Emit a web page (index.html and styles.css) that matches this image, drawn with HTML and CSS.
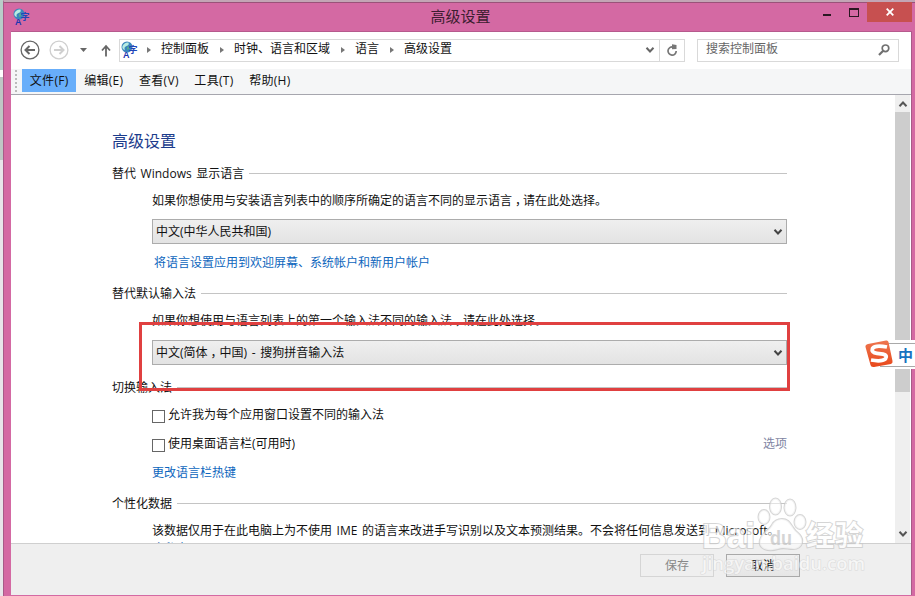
FILE: index.html
```html
<!DOCTYPE html>
<html lang="zh-CN">
<head>
<meta charset="utf-8">
<title>高级设置</title>
<link rel="stylesheet" href="styles.css">
</head>
<body>
<svg class="defs" width="0" height="0">
  <symbol id="lang" viewBox="0 0 18 18" overflow="visible">
    <circle cx="6" cy="6" r="5.500" fill="#3a86bd"/>
    <path d="M1.500 5Q3.500 1 7.500 1.500Q8.500 4 5.500 5T4 9Q.5 8 1.500 5Z" fill="#b8ece2"/>
    <path d="M6 6L9 4.500L8 8L6 9Z" fill="#52aa91"/>
    <text x="7.500" y="12" class="g-zi">字</text>
    <text x="2" y="17" class="g-a">A</text>
  </symbol>
  <symbol id="chev" viewBox="0 0 10 8"><path d="M1.500 1.800L5 5.500L8.500 1.800" fill="none" stroke="currentColor" stroke-width="2"/></symbol>
</svg>
<div class="window">
  <header class="title">
    <svg class="t-icon"><use href="#lang"/></svg>
    <span class="t-text">高级设置</span>
    <div class="controls">
      <svg class="c-min" viewBox="0 0 8 2"><path d="M0 0H8V2H0Z" fill="#2b1722"/></svg>
      <svg class="c-max" viewBox="0 0 10 9"><path d="M0 0H10V9H0ZM1 2V8H9V2Z" fill="#2b1722" fill-rule="evenodd"/></svg>
      <div class="c-close"><svg width="8" height="8" viewBox="0 0 8 8"><path d="M.7.7L7.300 7.300M7.300.7L.7 7.300" stroke="#fff" stroke-width="1.800"/></svg></div>
    </div>
  </header>
  <div class="client">
    <nav class="nav">
      <svg class="arrow" viewBox="0 0 20 20"><g fill="none" stroke="#666"><circle cx="10" cy="10" r="8.900" stroke-width="1.300"/><path d="M15 10H6M9.500 6L5.500 10L9.500 14" stroke-width="2"/></g></svg>
      <svg class="arrow fwd" viewBox="0 0 20 20"><g fill="none" stroke="#cfcfcf"><circle cx="10" cy="10" r="8.900" stroke-width="1.300"/><path d="M5 10H14M10.500 6L14.500 10L10.500 14" stroke-width="2"/></g></svg>
      <svg class="hist" viewBox="0 0 7 4"><path d="M0 0H7L3.500 4Z" fill="#666"/></svg>
      <svg class="up" viewBox="0 0 10 12"><path d="M5 12V2M1 6L5 1.500L9 6" fill="none" stroke="#666" stroke-width="1.800"/></svg>
      <div class="address">
        <svg class="a-icon"><use href="#lang"/></svg>
        <i class="tri"></i><span>控制面板</span>
        <i class="tri"></i><span>时钟、语言和区域</span>
        <i class="tri"></i><span>语言</span>
        <i class="tri"></i><span>高级设置</span>
        <svg class="a-chev"><use href="#chev"/></svg>
        <div class="refresh"><svg width="12" height="13" viewBox="0 0 12 13"><path d="M7 3A4.100 4.100 0 1 0 10.200 7" fill="none" stroke="#777" stroke-width="1.700"/><path d="M6 .3L10.500 1V5L6 5.200Z" fill="#777"/></svg></div>
      </div>
      <div class="search"><span>搜索控制面板</span><svg width="12" height="12" viewBox="0 0 12 12"><circle cx="7.500" cy="4.300" r="3.300" fill="none" stroke="#707070" stroke-width="1.700"/><path d="M5.200 6.800L1 11" stroke="#707070" stroke-width="2.200"/></svg></div>
    </nav>
    <div class="menu">
      <i class="grip"></i>
      <span class="on">文件(F)</span><span>编辑(E)</span><span>查看(V)</span><span>工具(T)</span><span>帮助(H)</span>
    </div>
    <div class="main">
      <div class="page">
        <h1>高级设置</h1>
        <h2>替代 Windows 显示语言</h2>
        <p class="desc">如果你想使用与安装语言列表中的顺序所确定的语言不同的显示语言<span class="comma">，</span>请在此处选择。</p>
        <div class="select">中文(中华人民共和国)<svg><use href="#chev"/></svg></div>
        <a class="apply">将语言设置应用到欢迎屏幕、系统帐户和新用户帐户</a>
        <h2>替代默认输入法</h2>
        <p class="desc">如果你想使用与语言列表上的第一个输入法不同的输入法<span class="comma">，</span>请在此处选择。</p>
        <div class="select second">中文(简体<span class="comma">，</span>中国) - 搜狗拼音输入法<svg><use href="#chev"/></svg></div>
        <h2 class="switch">切换输入法</h2>
        <div class="check first"><i></i>允许我为每个应用窗口设置不同的输入法</div>
        <div class="check"><i></i>使用桌面语言栏(可用时)<span class="option">选项</span></div>
        <a class="hotkey">更改语言栏热键</a>
        <h2 class="personal">个性化数据</h2>
        <p class="desc data">该数据仅用于在此电脑上为不使用 IME 的语言来改进手写识别以及文本预测结果。不会将任何信息发送到 Microsoft。</p>
        <a class="privacy">隐私声明</a>
      </div>
      <div class="scroll">
        <svg class="s-up"><use href="#chev"/></svg>
        <div class="thumb"></div>
        <svg class="s-down"><use href="#chev"/></svg>
      </div>
    </div>
    <footer><div class="btn off">保存</div><div class="btn">取消</div></footer>
  </div>
</div>
<div class="marker"></div>
<div class="ime"><span>中</span></div>
<svg class="sogou" viewBox="0 0 28 28">
  <defs><linearGradient id="og" x1="0" y1="0" x2="0" y2="1"><stop offset="0" stop-color="#ee7650"/><stop offset="1" stop-color="#e8481a"/></linearGradient></defs>
  <path d="M3 4L21 .5Q23 0 23.500 2L27.500 21Q28 23 26 24L9 27Q6 27.500 5.500 25L.5 7Q0 5 3 4Z" fill="url(#og)"/>
  <path d="M22 7Q10 4.500 7.500 8.500Q6 12.500 12 13.300L18 14.200Q23 15.500 20.500 18.800Q17 22 6 20" fill="none" stroke="#fff" stroke-width="3.800"/>
</svg>
<svg class="wm" viewBox="0 0 170 85">
  <g class="wm-big"><text x="0" y="51" textLength="53" lengthAdjust="spacingAndGlyphs">Bai</text><text class="wm-cjk" x="104" y="49" textLength="57">经验</text></g>
  <g class="paw"><ellipse cx="62" cy="20" rx="5.500" ry="7"/><ellipse cx="73.500" cy="9.500" rx="5.500" ry="8"/><ellipse cx="88" cy="10.500" rx="5.500" ry="8"/><ellipse cx="98" cy="25" rx="5.500" ry="7"/><path d="M80 22C89 22 89 31 96 36C103 42 101 52 91 52C85 52 82 50 76 52C66 55 56 52 58 43C60 35 67 34 70 28C72 24 76 22 80 22Z"/></g>
  <text class="wm-du" x="68" y="48" textLength="22" lengthAdjust="spacingAndGlyphs">du</text>
  <text class="wm-url" x="0" y="73" textLength="163" lengthAdjust="spacingAndGlyphs">jingyan.baidu.com</text>
</svg>
</body>
</html>
```
FILE: styles.css
```css
* { box-sizing: border-box; }
body {
  margin: 0; width: 915px; height: 596px; overflow: hidden; position: relative;
  background: linear-gradient(#b9cdc9 0 70px, #fff 70px 77px, #bfc5c5 77px 160px, #e8e6ea 160px);
  font: 12px/16px "Open Sans", "Noto Sans CJK SC", sans-serif; color: #111; word-spacing: 1.5px;
}
.defs { position: absolute; }
svg { flex: none; display: block; overflow: visible; }
.g-zi { font: bold 9px "Noto Sans CJK SC", sans-serif; fill: #2145b8; }
.g-a { font: bold 9px "Liberation Sans", sans-serif; fill: #1b35b0; }
.window {
  height: 596px; margin-left: 3px; padding: 0 3px 1px 7px;
  background: #d469a3; border-top: 2px solid #c3a5b5; border-left: 1px solid #a75b87;
  display: flex; flex-direction: column; box-shadow: inset 0 1px #9a5279;
}
.title { height: 30px; display: flex; position: relative; flex: none; border-bottom: 1px solid #b65a8d; }
.t-icon { width: 18px; height: 18px; margin: 6px 0 0 2px; }
.t-text { flex: 1; text-align: center; font-size: 15px; line-height: 29px; color: #3c1d30; padding-left: 67px; }
.controls { display: flex; }
.c-min { width: 8px; height: 2px; margin: 12px 18px 0 0; }
.c-max { width: 10px; height: 9px; margin: 6px 8px 0 0; }
.c-close { width: 45px; height: 20px; background: #c75050; display: flex; align-items: center; justify-content: center; }
.client { flex: 1; min-height: 0; background: #fff; display: flex; flex-direction: column; border-right: 1px solid #a75b87; }
.nav { height: 37px; display: flex; align-items: center; padding: 0 12px 1px 9px; flex: none; }
.nav span { padding-bottom: 2px; }
.arrow { width: 20px; height: 20px; }
.fwd { margin-left: 9px; }
.hist { width: 7px; height: 4px; margin-left: 11px; }
.up { width: 10px; height: 13px; margin: 0 8px 0 14px; }
.address { width: 566px; height: 23px; border: 1px solid #d9d9d9; display: flex; align-items: center; }
.a-icon { width: 18px; height: 18px; margin: 0 8px 0 1px; }
.tri { border-left: 4px solid #777; border-top: 3.5px solid transparent; border-bottom: 3.5px solid transparent; margin: 0 10px 0 11px; }
.a-icon + .tri { margin-left: 0; }
.a-chev { width: 10px; height: 8px; margin: 0 4px 0 auto; color: #666; }
.refresh { width: 25px; height: 21px; border-left: 1px solid #d9d9d9; display: flex; align-items: center; justify-content: center; }
.search { width: 202px; height: 23px; margin-left: 12px; border: 1px solid #d9d9d9; display: flex; align-items: center; justify-content: space-between; padding: 0 8px; color: #666; }
.menu { height: 26px; flex: none; background: #f5f6f7; border-bottom: 1px solid #a6a6ae; display: flex; padding-left: 4px; letter-spacing: .3px; }
.grip { width: 2px; height: 22px; margin: 1px 5px 0 0; background: repeating-linear-gradient(#bbb 0 2px, transparent 2px 4px); }
.menu span { height: 23px; line-height: 23px; padding: 0 7.8px; white-space: nowrap; }
.menu .on { background: #68aefa; }
.main { flex: 1; min-height: 0; display: flex; overflow: hidden; }
.page { width: 884px; padding: 36px 108px 0 101px; overflow: hidden; }
h1 { margin: 0 0 15px; font-size: 16px; line-height: 20px; font-weight: 400; color: #1c3c8c; }
h2 { margin: 0; font-size: 12px; line-height: 16px; font-weight: 400; display: flex; align-items: center; gap: 5px; white-space: nowrap; }
h2::after { content: ""; flex: 1; height: 1px; margin-bottom: 2px; background: #c4c4c4; }
.desc { margin: 11px 0 10px 40px; white-space: nowrap; }
.comma { display: inline-block; width: 12px; padding-left: 3px; margin-right: -1px; }
.select {
  height: 25px; margin-left: 40px; padding: 0 3px; border: 1px solid #acacac;
  background: linear-gradient(#efefef, #e3e3e3); display: flex; align-items: center; white-space: pre;
}
.select .comma { margin-right: 0; }
.select svg { width: 10px; height: 8px; margin-left: auto; color: #444; }
a { display: block; width: max-content; color: #0d66bd; }
.apply { margin: 11px 0 15px 42px; }
.second { margin-top: 11px; }
.switch { margin-top: 15px; }
.check { height: 16px; margin: 13px 0 0 40px; display: flex; align-items: center; gap: 3px; }
.check.first { margin-top: 11px; }
.check i { width: 13px; height: 13px; border: 1px solid #666; margin-top: 3px; }
.option { margin-left: auto; color: #8084a2; }
.hotkey { margin: 13px 0 15px 40px; }
.data { margin-bottom: 2px; }
.privacy { margin-left: 40px; }
.scroll { width: 15px; margin-left: 0; background: #efefef; display: flex; flex-direction: column; align-items: center; color: #555; }
.s-up { width: 10px; height: 8px; margin: 5px 0 4px; transform: rotate(180deg); }
.thumb { width: 15px; height: 280px; background: #cdcdcd; }
.s-down { width: 10px; height: 8px; margin: auto 0 5px; }
footer { height: 52px; flex: none; background: #efefef; border-top: 1px solid #cfcfcf; display: flex; justify-content: flex-end; gap: 12px; padding: 10px 111px 0 0; }
.btn { width: 74px; height: 23px; border: 1px solid #a9a9a9; background: linear-gradient(#f0f0f0, #e6e6e6); text-align: center; line-height: 21px; }
.off { border-color: #d5d5d5; background: #efefef; color: #888; }
.marker { position: absolute; left: 139px; top: 322px; width: 651px; height: 69px; border: 3px solid #e04040; }
.ime { position: absolute; left: 880px; top: 340px; width: 35px; height: 29px; background: #fff; padding: 3px 0 2px; }
.ime span { display: block; height: 24px; border: solid #a9a9a9; border-width: 1px 0; padding-left: 18px; font: bold 15px/21px "Noto Sans CJK SC", sans-serif; color: #1672c0; white-space: nowrap; }
.sogou { position: absolute; left: 865px; top: 340px; width: 28px; height: 28px; }
.wm { position: absolute; left: 702px; top: 497px; width: 170px; height: 85px; overflow: visible; opacity: .75; }
.wm text, .paw { fill: rgba(255, 255, 255, .7); stroke: #c8c8c8; stroke-width: 2; paint-order: stroke; }
.wm-big text { font: bold 35px "Liberation Sans", sans-serif; fill: #fff; }
.wm-big .wm-cjk { font: bold 28px "Noto Sans CJK SC", sans-serif; fill: #fff; }
.wm .wm-du { font: bold 20px "Liberation Sans", sans-serif; fill: #c8c8c8; stroke: none; }
.wm .wm-url { font: 600 18px "Open Sans", sans-serif; fill: rgba(255, 255, 255, .8); stroke: #d2d2d2; stroke-width: 1; }
```
